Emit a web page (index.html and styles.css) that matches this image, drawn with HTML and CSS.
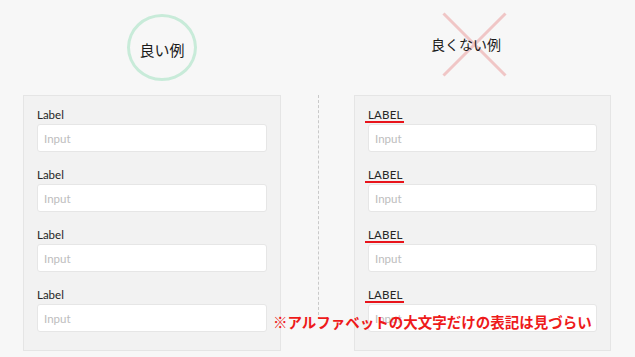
FILE: index.html
```html
<!DOCTYPE html>
<html>
<head>
  <title>Label examples</title>
  <link rel="stylesheet" href="styles.css">
</head>
<body>
<div class="page">
  <section class="column column-good">
    <header class="column-head">
      <div class="mark-good"><span>良い例</span></div>
    </header>
    <div class="form-panel">
      <div class="field"><label class="field-label">Label</label><input class="field-input" placeholder="Input" /></div>
      <div class="field"><label class="field-label">Label</label><input class="field-input" placeholder="Input" /></div>
      <div class="field"><label class="field-label">Label</label><input class="field-input" placeholder="Input" /></div>
      <div class="field"><label class="field-label">Label</label><input class="field-input" placeholder="Input" /></div>
    </div>
  </section>
  <div class="divider"></div>
  <section class="column column-bad">
    <header class="column-head">
      <div class="mark-bad">
        <svg class="cross" width="65" height="65" viewBox="0 0 65 65">
          <line x1="1.5" y1="1.5" x2="63.5" y2="63.5" />
          <line x1="63.5" y1="1.5" x2="1.5" y2="63.5" />
        </svg>
        <span class="mark-text">良くない例</span>
      </div>
    </header>
    <div class="form-panel">
      <div class="field"><label class="field-label caps"><span class="marked">Label</span></label><input class="field-input" placeholder="Input" /></div>
      <div class="field"><label class="field-label caps"><span class="marked">Label</span></label><input class="field-input" placeholder="Input" /></div>
      <div class="field"><label class="field-label caps"><span class="marked">Label</span></label><input class="field-input" placeholder="Input" /></div>
      <div class="field"><label class="field-label caps"><span class="marked">Label</span></label><input class="field-input" placeholder="Input" /></div>
    </div>
  </section>
  <p class="note">※アルファベットの大文字だけの表記は見づらい</p>
</div>
</body>
</html>
```

FILE: styles.css
```css
body {
  margin: 0;
  padding: 0;
  background: #f7f7f7;
  font-family: "Lato", "Noto Sans CJK JP", sans-serif;
}
.page {
  position: relative;
  display: flex;
  align-items: flex-start;
  height: 357px;
  padding-left: 23px;
  overflow: hidden;
}
.column-good {
  width: 258px;
}
.column-bad {
  width: 257px;
}
.column-head {
  box-sizing: border-box;
  height: 95px;
}
.column-good .column-head {
  padding: 14px 0 0 104px;
}
.column-bad .column-head {
  padding: 34px 0 0 77px;
}
.divider {
  width: 0;
  height: 220px;
  margin: 95px 35px 0 37px;
  border-left: 1px dashed #c9c9c9;
}

/* headings */
.mark-good {
  display: flex;
  align-items: center;
  justify-content: center;
  box-sizing: border-box;
  width: 70px;
  height: 67px;
  padding-top: 3px;
  border: 3px solid #c8ebd9;
  border-radius: 50%;
  font-family: "Noto Sans CJK JP", sans-serif;
  font-size: 15px;
  color: #1a1a1a;
}
.mark-bad {
  position: relative;
  display: inline-block;
  font-family: "Noto Sans CJK JP", sans-serif;
  font-size: 14px;
  line-height: 20px;
  color: #1a1a1a;
}
.cross {
  position: absolute;
  left: 11px;
  top: -22px;
}
.cross line {
  stroke: #f0c6c6;
  stroke-width: 3;
}
.mark-text {
  position: relative;
}

/* form */
.form-panel {
  height: 256px;
  box-sizing: border-box;
  padding: 12px 13px 0 13px;
  background: #f2f2f2;
  border: 1px solid #e5e5e5;
}
.field {
  margin-bottom: 16px;
}
.field-label {
  display: block;
  margin-bottom: 2px;
  font-size: 11.5px;
  line-height: 14px;
  color: #262626;
}
.field-input {
  display: block;
  box-sizing: border-box;
  width: 100%;
  height: 28px;
  margin: 0;
  padding: 0 6px;
  background: #fff;
  border: 1px solid #e6e6e6;
  border-radius: 3px;
  font-family: "Lato", sans-serif;
  font-size: 11.5px;
  outline: none;
}
.field-input::placeholder {
  color: #bdbdbd;
}
.caps {
  text-transform: uppercase;
  letter-spacing: 0.2px;
}
.marked {
  position: relative;
}
.marked::after {
  content: "";
  position: absolute;
  left: -3px;
  right: -1px;
  bottom: -2px;
  height: 2px;
  background: #e8141b;
}

.note {
  position: absolute;
  left: 273px;
  top: 314px;
  margin: 0;
  font-family: "Noto Sans CJK JP", sans-serif;
  font-size: 14.5px;
  font-weight: bold;
  line-height: 16px;
  color: #ee1a1a;
  white-space: nowrap;
}
```
